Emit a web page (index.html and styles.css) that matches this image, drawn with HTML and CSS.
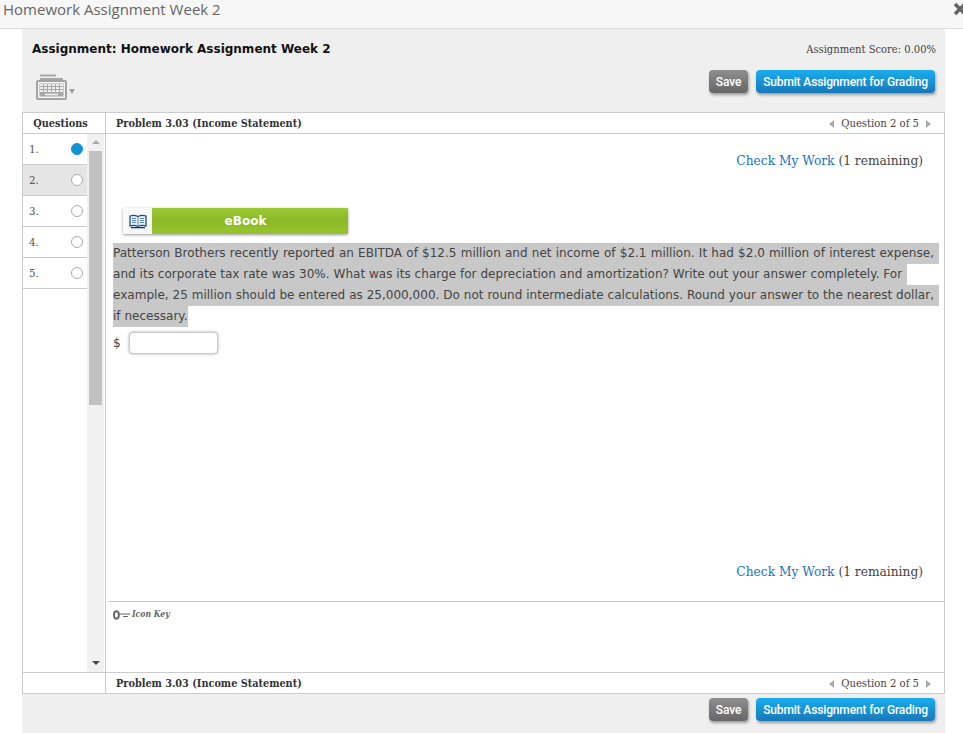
FILE: index.html
```html
<!DOCTYPE html>
<html lang="en">
<head>
    <meta charset="UTF-8">
    <title>Homework Assignment Week 2</title>
    <link rel="stylesheet" href="styles.css">
</head>
<body>
    <div class="title-bar">
        <span class="title-text">Homework Assignment Week 2</span>
        <svg class="close-icon" width="14" height="14" viewBox="0 0 14 14"><path d="M2 2 L12 12 M12 2 L2 12" stroke="#666" stroke-width="3.6" fill="none"/></svg>
    </div>

    <div class="assignment">
        <div class="top-panel">
            <div class="top-row">
                <h1>Assignment: Homework Assignment Week 2</h1>
                <span class="score">Assignment Score: 0.00%</span>
            </div>
            <div class="tools-row">
                <div class="keyboard">
                    <svg width="31" height="26" viewBox="0 0 31 26">
                        <path d="M4 1.5 H20 M4 5 H27" stroke="#a8a8a8" stroke-width="2" fill="none"/>
                        <rect x="1" y="7" width="29" height="18" rx="1" fill="#f2f2f2" stroke="#a3a3a3" stroke-width="2"/>
                        <rect x="3.5" y="9.5" width="24" height="13" fill="#a8a8a8"/>
                        <path d="M4 11 H27 M4 14 H27 M4 17 H27" stroke="#efefef" stroke-width="2" stroke-dasharray="3 1" fill="none"/>
                        <path d="M9 20.5 H22" stroke="#efefef" stroke-width="1.6" fill="none"/>
                    </svg>
                    <span class="caret"></span>
                </div>
                <div class="actions">
                    <button class="btn btn-save">Save</button>
                    <button class="btn btn-submit">Submit Assignment for Grading</button>
                </div>
            </div>
        </div>

        <div class="frame">
            <div class="bar-row">
                <div class="bar-left">Questions</div>
                <div class="bar-main">
                    <span>Problem 3.03 (Income Statement)</span>
                    <span class="pager"><i class="arrow-left"></i>Question 2 of 5<i class="arrow-right"></i></span>
                </div>
            </div>

            <div class="middle">
                <div class="sidebar">
                    <ul class="question-list">
                        <li><span>1.</span><i class="radio radio-on"></i></li>
                        <li class="current"><span>2.</span><i class="radio"></i></li>
                        <li><span>3.</span><i class="radio"></i></li>
                        <li><span>4.</span><i class="radio"></i></li>
                        <li><span>5.</span><i class="radio"></i></li>
                    </ul>
                    <div class="scrollbar">
                        <i class="scroll-up"></i>
                        <div class="thumb"></div>
                        <i class="scroll-down"></i>
                    </div>
                </div>

                <div class="content">
                    <div class="question-area">
                        <p class="check-work"><a href="#">Check My Work</a> (1 remaining)</p>
                        <div class="ebook">
                            <span class="ebook-icon">
                                <svg width="18" height="15" viewBox="0 0 18 15">
                                    <path d="M1 2 Q5 0.5 9 2.5 Q13 0.5 17 2 V12 Q13 10.5 9 12.5 Q5 10.5 1 12 Z" fill="#e8f0f8" stroke="#1d4f86" stroke-width="1.3"/>
                                    <path d="M9 3 V13 M3 4.5 H7 M3 6.5 H7 M3 8.5 H7 M11 4.5 H15 M11 6.5 H15 M11 8.5 H15" stroke="#5c88b5" stroke-width="1" fill="none"/>
                                    <path d="M2 13.6 H16" stroke="#123a68" stroke-width="1.4"/>
                                </svg>
                            </span>
                            <span class="ebook-label">eBook</span>
                        </div>
                        <div class="question-text">
                            <mark class="full">Patterson Brothers recently reported an EBITDA of $12.5 million and net income of $2.1 million. It had $2.0 million of interest expense,</mark>
                            <mark class="mid">and its corporate tax rate was 30%. What was its charge for depreciation and amortization? Write out your answer completely. For</mark>
                            <mark class="full">example, 25 million should be entered as 25,000,000. Do not round intermediate calculations. Round your answer to the nearest dollar,</mark>
                            <mark>if necessary.</mark>
                        </div>
                        <div class="answer"><span>$</span><input type="text"></div>
                        <p class="check-work check-bottom"><a href="#">Check My Work</a> (1 remaining)</p>
                    </div>
                    <div class="icon-key">
                        <svg width="18" height="10" viewBox="0 0 18 10">
                            <ellipse cx="3.4" cy="5" rx="2.5" ry="3.7" fill="none" stroke="#666" stroke-width="1.9"/>
                            <path d="M6 4 H17 M10 6.5 H15" stroke="#666" stroke-width="1.2" fill="none"/>
                        </svg>
                        <em>Icon Key</em>
                    </div>
                </div>
            </div>

            <div class="bar-row bar-bottom">
                <div class="bar-left"></div>
                <div class="bar-main">
                    <span>Problem 3.03 (Income Statement)</span>
                    <span class="pager"><i class="arrow-left"></i>Question 2 of 5<i class="arrow-right"></i></span>
                </div>
            </div>
        </div>

        <div class="bottom-panel">
            <button class="btn btn-save">Save</button>
            <button class="btn btn-submit">Submit Assignment for Grading</button>
        </div>
    </div>
</body>
</html>
```

FILE: styles.css
```css
html, body {
    margin: 0;
    height: 733px;
    overflow: hidden;
    background-color: #fff;
}

body {
    font-family: "DejaVu Sans", Verdana, sans-serif;
    color: #333;
}

/* Title */
.title-bar {
    height: 28px;
    background-color: #f7f7f7;
    border-bottom: 1px solid #ddd;
    display: flex;
    justify-content: space-between;
}

.title-text {
    font-family: "Open Sans", sans-serif;
    font-size: 15px;
    line-height: 18px;
    padding-left: 3px;
    color: #666;
}

.close-icon {
    margin: 2px -4px 0 0;
    flex: none;
}

.assignment {
    width: 923px;
    margin-left: 22px;
}

/* Top gray panel */
.top-panel {
    height: 83px;
    background-color: #efefef;
    box-sizing: border-box;
    padding: 12px 9px 0 10px;
}

.top-row {
    display: flex;
    justify-content: space-between;
    align-items: center;
}

h1 {
    margin: 0;
    font-size: 12px;
    line-height: 16px;
    color: #111;
}

.score {
    font-family: "DejaVu Serif Condensed", "DejaVu Serif", serif;
    font-size: 11.1px;
    color: #444;
}

.tools-row {
    display: flex;
    justify-content: space-between;
    margin-top: 13px;
}

.keyboard {
    display: flex;
    align-items: center;
    margin: 4px 0 0 4px;
}

.caret {
    border-top: 5px solid #a0a0a0;
    border-left: 3.5px solid transparent;
    border-right: 3.5px solid transparent;
    margin: 8px 0 0 2px;
}

.actions, .bottom-panel {
    display: flex;
    gap: 8px;
}

.actions {
    margin-right: 1px;
}

.btn {
    height: 23px;
    padding: 0;
    border: 0;
    border-radius: 4px;
    color: #fff;
    font-family: "Roboto", "Open Sans", sans-serif;
    font-size: 12px;
    font-weight: 500;
    letter-spacing: -0.14px;
    white-space: nowrap;
    box-shadow: 1px 2px 3px rgba(0, 0, 0, 0.35);
}

.btn-save {
    width: 39px;
    background: linear-gradient(#8f8f8f, #666);
}

.btn-submit {
    width: 179px;
    background: linear-gradient(#18aeef, #1878b8);
}

/* Main frame */
.frame {
    border: 1px solid #ccc;
    background-color: #fff;
}

.bar-row {
    display: flex;
    height: 20px;
    border-bottom: 1px solid #ccc;
    font-family: "DejaVu Serif Condensed", "DejaVu Serif", serif;
    font-size: 10.8px;
    font-weight: bold;
    line-height: 21px;
    color: #333;
}

.bar-bottom {
    border-bottom: 0;
    border-top: 1px solid #ccc;
}

.bar-left {
    width: 75px;
    padding-right: 7px;
    text-align: center;
    border-right: 1px solid #ccc;
    flex: none;
}

.bar-main {
    flex: 1;
    display: flex;
    justify-content: space-between;
    padding: 0 13px 0 10px;
}

.pager {
    font-weight: normal;
    font-size: 11.2px;
    display: flex;
    align-items: center;
    gap: 7px;
    padding-top: 1px;
    color: #444;
}

.arrow-left, .arrow-right {
    border-top: 4px solid transparent;
    border-bottom: 4px solid transparent;
}

.arrow-left {
    border-right: 5px solid #aaa;
}

.arrow-right {
    border-left: 5px solid #aaa;
}

.middle {
    display: flex;
    height: 538px;
}

.sidebar {
    width: 82px;
    flex: none;
    display: flex;
    border-right: 1px solid #ccc;
}

.question-list {
    list-style: none;
    margin: 0;
    padding: 0;
    flex: 1;
}

.question-list li {
    height: 30px;
    border-bottom: 1px solid #ccc;
    display: flex;
    justify-content: space-between;
    align-items: center;
    padding: 0 4px 0 6px;
    font-family: "DejaVu Serif Condensed", "DejaVu Serif", serif;
    font-size: 11.5px;
    color: #555;
}

.question-list .current {
    background-color: #e5e5e5;
}

.radio {
    width: 10px;
    height: 10px;
    border: 1px solid #aaa;
    border-radius: 50%;
    background-color: #fff;
}

.radio-on {
    background-color: #0f93d2;
    border-color: #0f93d2;
}

.scrollbar {
    width: 17px;
    flex: none;
    margin-right: 1px;
    background-color: #f1f1f1;
    position: relative;
}

.thumb {
    position: absolute;
    top: 17px;
    left: 2px;
    width: 13px;
    height: 254px;
    background-color: #c1c1c1;
}

.scroll-up, .scroll-down {
    position: absolute;
    left: 5px;
    border-left: 4px solid transparent;
    border-right: 4px solid transparent;
}

.scroll-up {
    top: 6px;
    border-bottom: 4px solid #a8a8a8;
}

.scroll-down {
    bottom: 7px;
    border-top: 4px solid #444;
}

.content {
    flex: 1;
    display: flex;
    flex-direction: column;
    margin-left: 2px;
}

.question-area {
    height: 467px;
    border-bottom: 1px solid #ccc;
    padding: 0 4px 0 5px;
}

.check-work {
    margin: 17px 17px 0 0;
    text-align: right;
    font-family: "DejaVu Serif Condensed", "DejaVu Serif", serif;
    font-size: 13.6px;
    line-height: 18px;
    color: #444;
}

.check-work a {
    color: #1a73bd;
    text-decoration: none;
}

.check-bottom {
    margin-top: 208px;
}

.ebook {
    display: flex;
    width: 225px;
    height: 26px;
    margin: 39px 0 0 10px;
    border-radius: 2px;
    box-shadow: 0 1px 3px rgba(0, 0, 0, 0.4);
}

.ebook-icon {
    width: 29px;
    background-color: #f8f9fb;
    display: flex;
    align-items: center;
    justify-content: center;
}

.ebook-label {
    flex: 1;
    background: linear-gradient(#9ac832, #8cb828 50%, #98c52e);
    color: #fff;
    font-weight: bold;
    font-size: 12px;
    line-height: 27px;
    text-align: center;
    padding-right: 9px;
}

.question-text {
    margin-top: 9px;
    font-size: 12px;
    line-height: 21px;
    letter-spacing: 0.02px;
    white-space: nowrap;
}

mark {
    display: block;
    width: fit-content;
    background-color: #c8c8c8;
    color: #444;
}

mark.full {
    width: 821px;
    padding-right: 5px;
    white-space: normal;
    text-align-last: justify;
}

mark.mid {
    padding-right: 5px;
    letter-spacing: 0.035px;
}

.answer {
    display: flex;
    align-items: center;
    gap: 8px;
    margin-top: 5px;
    font-size: 12px;
    color: #444;
}

.answer input {
    width: 87px;
    height: 20px;
    padding: 0;
    border: 1px solid #ccc;
    border-radius: 4px;
    box-shadow: 0 0 3px rgba(0, 0, 0, 0.35);
}

.icon-key {
    flex: 1;
    display: flex;
    align-items: flex-start;
    gap: 1px;
    padding: 7px 0 0 5px;
    font-family: "DejaVu Serif Condensed", "DejaVu Serif", serif;
    font-size: 8.6px;
    font-weight: bold;
    color: #666;
}

.icon-key svg {
    margin-top: 1px;
}

.bottom-panel {
    height: 39px;
    background-color: #efefef;
    justify-content: flex-end;
    box-sizing: border-box;
    padding: 4px 10px 0 0;
}
```
